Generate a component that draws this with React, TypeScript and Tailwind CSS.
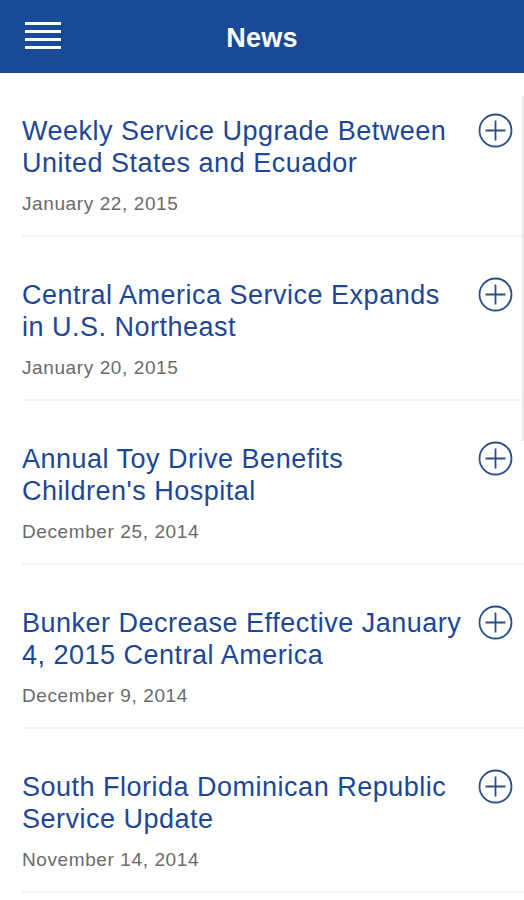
const news = [
  { title: "Weekly Service Upgrade Between United States and Ecuador", date: "January 22, 2015" },
  { title: "Central America Service Expands in U.S. Northeast", date: "January 20, 2015" },
  { title: "Annual Toy Drive Benefits Children's Hospital", date: "December 25, 2014" },
  { title: "Bunker Decrease Effective January 4, 2015 Central America", date: "December 9, 2014" },
  { title: "South Florida Dominican Republic Service Update", date: "November 14, 2014" },
];

function PlusCircle() {
  return (
    <svg width="35" height="35" viewBox="0 0 35 35" className="shrink-0">
      <circle cx="17.5" cy="17.5" r="16" fill="none" stroke="#2a4d8f" strokeWidth="1.8" />
      <path d="M17.5 7.5v20M7.5 17.5h20" stroke="#2a4d8f" strokeWidth="1.8" />
    </svg>
  );
}

export default function App() {
  return (
    <div className="relative w-[524px] h-[900px] overflow-hidden bg-white font-['Liberation_Sans',Arial,sans-serif]">
      <header className="relative h-[73px] bg-[#184a97] flex items-center justify-center">
        <button className="absolute left-[25px] top-[22px] flex flex-col gap-[5px]">
          <span className="block w-[36px] h-[3px] bg-white" />
          <span className="block w-[36px] h-[3px] bg-white" />
          <span className="block w-[36px] h-[3px] bg-white" />
          <span className="block w-[36px] h-[3px] bg-white" />
        </button>
        <h1 className="mt-[4px] text-white text-[27px] font-bold tracking-[0.3px]">News</h1>
      </header>

      <ul>
        {news.map((n) => (
          <li key={n.title} className="ml-[22px] pt-[42px] pb-[19px] border-b-2 border-[#f1f1f1]">
            <div className="flex items-start justify-between pr-[11px]">
              <h2 className="text-[#1c4796] text-[27px] leading-[32px] tracking-[0.5px] w-[440px]">{n.title}</h2>
              <div className="mt-[-2px]">
                <PlusCircle />
              </div>
            </div>
            <p className="mt-[13px] text-[19px] leading-[24px] tracking-[0.6px] text-[#6a6a6a]">{n.date}</p>
          </li>
        ))}
      </ul>

      <div className="absolute right-0 top-[96px] w-[2px] h-[345px] bg-[#e8e8e8]" />
    </div>
  );
}
